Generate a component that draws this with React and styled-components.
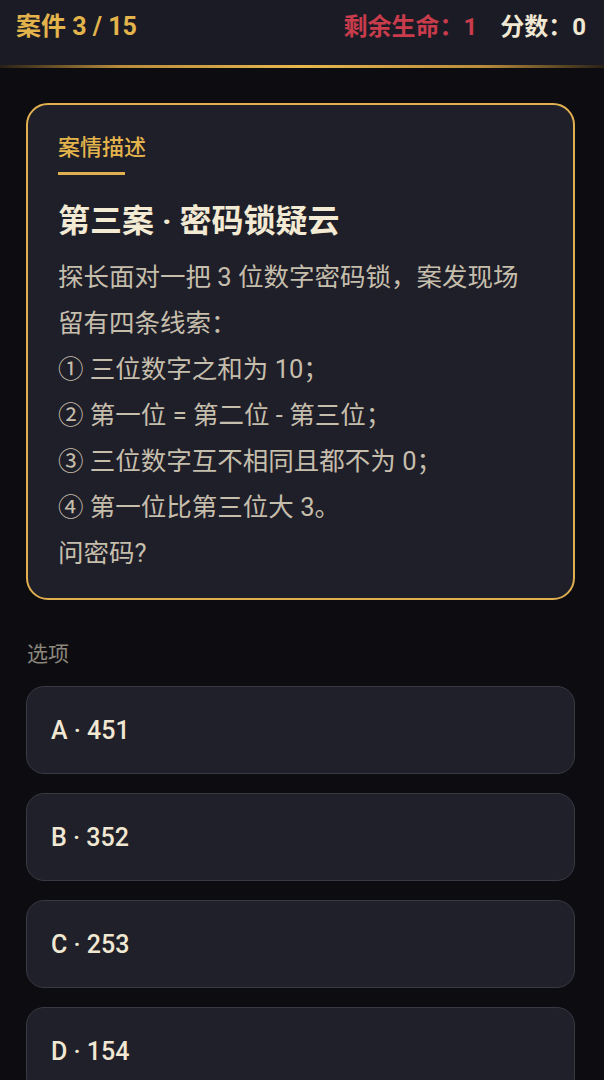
import React from "react";
import styled, { createGlobalStyle } from "styled-components";

const Global = createGlobalStyle`
  html, body { margin: 0; padding: 0; background: #0d0d11; }
  body { font-family: "Roboto", "Noto Sans CJK SC", sans-serif; }
  * { box-sizing: border-box; }
`;

const Page = styled.div`
  min-height: 1080px;
  background: #0d0d11;
  display: flex;
  flex-direction: column;
`;

const Header = styled.header`
  height: 65px;
  background: #1a1b25;
  display: flex;
  align-items: center;
  justify-content: space-between;
  padding: 0 18px 17px 16px;
  font-size: 24px;
  font-weight: 700;
`;

const GoldLine = styled.div`
  height: 3px;
  background: linear-gradient(90deg, rgba(200,150,60,0.15) 0%, #b98c3c 20%, #e7b84f 50%, #b98c3c 80%, rgba(200,150,60,0.15) 100%);
`;

const CaseNo = styled.div`
  color: #e3b44c;
  font-size: 25px;
`;

const Stats = styled.div`
  display: flex;
  gap: 23px;
`;

const Stat = styled.span`
  color: ${p => p.$color};
`;

const Main = styled.main`
  padding: 35px 29px 0 26px;
  display: flex;
  flex-direction: column;
`;

const CaseCard = styled.section`
  border: 2px solid #e0b050;
  border-radius: 22px;
  background: #1f1f29;
  padding: 28px 30px 22px 30px;
  display: flex;
  flex-direction: column;
`;

const Label = styled.div`
  color: #e3b44c;
  font-size: 22px;
  line-height: 30px;
  font-weight: 500;
`;

const Underline = styled.div`
  width: 67px;
  height: 3px;
  background: #e0b050;
  margin-top: 9px;
`;

const Title = styled.h1`
  margin: 24px 0 0;
  color: #f3ead4;
  font-size: 32px;
  line-height: 44px;
  font-weight: 700;
`;

const Body = styled.div`
  margin-top: 11px;
  color: #c6beac;
  font-size: 25.5px;
  line-height: 46px;
  white-space: nowrap;
`;

const SectionLabel = styled.div`
  margin-top: 40px;
  margin-left: 1px;
  color: #8c877c;
  font-size: 21px;
  line-height: 28px;
`;

const Options = styled.div`
  margin-top: 18px;
  display: flex;
  flex-direction: column;
  gap: 19px;
`;

const Option = styled.button`
  height: 88px;
  border: 1.5px solid #393944;
  border-radius: 18px;
  background: #20202a;
  color: #f1e8d3;
  font-family: "Roboto", "Noto Sans CJK SC", sans-serif;
  font-size: 25px;
  font-weight: 500;
  text-align: left;
  padding: 0 0 0 24px;
  display: flex;
  align-items: center;
`;

const lines = [
  "探长面对一把 3 位数字密码锁，案发现场",
  "留有四条线索：",
  "① 三位数字之和为 10；",
  "② 第一位 = 第二位 - 第三位；",
  "③ 三位数字互不相同且都不为 0；",
  "④ 第一位比第三位大 3。",
  "问密码?",
];

const opts = ["A · 451", "B · 352", "C · 253", "D · 154"];

export default function App() {
  return (
    <Page>
      <Global />
      <Header>
        <CaseNo>案件 3 / 15</CaseNo>
        <Stats>
          <Stat $color="#c93c4c">剩余生命：1</Stat>
          <Stat $color="#f1e8d3">分数：0</Stat>
        </Stats>
      </Header>
      <GoldLine />
      <Main>
        <CaseCard>
          <Label>案情描述</Label>
          <Underline />
          <Title>第三案 · 密码锁疑云</Title>
          <Body>
            {lines.map((l, i) => (
              <div key={i}>{l}</div>
            ))}
          </Body>
        </CaseCard>
        <SectionLabel>选项</SectionLabel>
        <Options>
          {opts.map(o => (
            <Option key={o}>{o}</Option>
          ))}
        </Options>
      </Main>
    </Page>
  );
}
